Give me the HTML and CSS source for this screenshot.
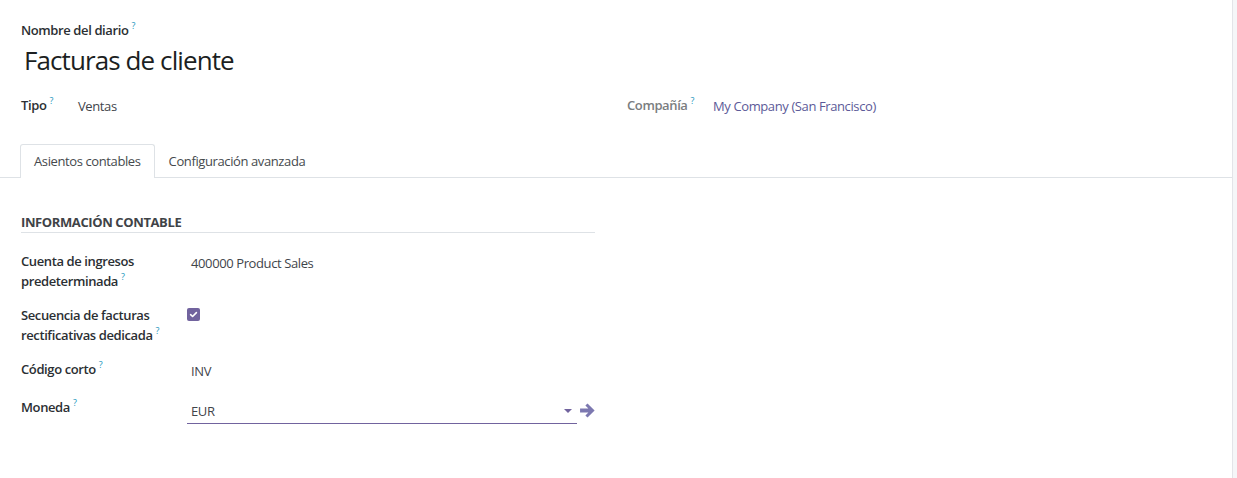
FILE: index.html
```html
<!DOCTYPE html>
<html lang="es">
<head>
<meta charset="utf-8">
<title>Facturas de cliente</title>
<link rel="stylesheet" href="styles.css">
</head>
<body>
<div class="app">
  <main class="form">
    <div class="sheet">
      <div class="title-block">
        <div class="lbl">Nombre del diario<sup class="tip">?</sup></div>
        <h1 class="title">Facturas de cliente</h1>
      </div>
      <div class="top-group">
        <div class="top-col">
          <div class="lbl tipo-lbl">Tipo<sup class="tip">?</sup></div>
          <div class="val">Ventas</div>
        </div>
        <div class="top-col">
          <div class="lbl comp-lbl muted">Compañía<sup class="tip">?</sup></div>
          <div class="val link">My Company (San Francisco)</div>
        </div>
      </div>
    </div>
    <div class="tabs">
      <div class="tab active">Asientos contables</div>
      <div class="tab">Configuración avanzada</div>
    </div>
    <div class="tab-content">
      <section class="group">
        <div class="group-title">INFORMACIÓN CONTABLE</div>
        <div class="rows">
          <div class="lbl row-lbl">Cuenta de ingresos predeterminada<sup class="tip">?</sup></div>
          <div class="row-val"><span class="val">400000 Product Sales</span></div>

          <div class="lbl row-lbl">Secuencia de facturas rectificativas dedicada<sup class="tip">?</sup></div>
          <div class="row-val">
            <span class="checkbox">
              <svg width="9" height="9" viewBox="0 0 9 9"><path d="M1.6 4.7 L3.6 6.5 L7.4 2.6" fill="none" stroke="#fff" stroke-width="1.6" stroke-linecap="round" stroke-linejoin="round"/></svg>
            </span>
          </div>

          <div class="lbl row-lbl">Código corto<sup class="tip">?</sup></div>
          <div class="row-val"><span class="val">INV</span></div>

          <div class="lbl row-lbl">Moneda<sup class="tip">?</sup></div>
          <div class="row-val currency">
            <div class="select">
              <span class="val">EUR</span>
              <span class="caret"></span>
            </div>
            <svg class="go" width="17" height="17" viewBox="0 0 16 16"><path d="M1 6.1 H8.8 L6 3.3 L8 1.3 L14.7 8 L8 14.7 L6 12.7 L8.8 9.9 H1 Z" fill="#7c78b0"/></svg>
          </div>
        </div>
      </section>
    </div>
  </main>
  <aside class="side"></aside>
</div>
</body>
</html>
```

FILE: styles.css
```css
* { box-sizing: border-box; }
html, body { margin: 0; padding: 0; }
body {
  font-family: "Open Sans", "Noto Sans", sans-serif;
  font-size: 13px;
  line-height: 20px;
  letter-spacing: -0.03em;
  color: #212529;
  background: #fff;
}
.app {
  display: flex;
  height: 478px;
}
.form {
  width: 1233px;
  border-right: 1px solid #e3e4e8;
}
.side {
  flex: 1;
  background: #f5f6f8;
}
.sheet {
  padding: 20px 0 0 21px;
}
.lbl {
  font-weight: 600;
  color: #2b2f33;
}
.muted { color: #7a7d80; }
.tip {
  font-size: 9px;
  font-weight: 400;
  color: #2196bd;
  margin-left: 3px;
  vertical-align: 6px;
  line-height: 0;
}
.title {
  margin: 3px 0 0 3px;
  font-size: 26px;
  line-height: 35px;
  font-weight: 400;
  letter-spacing: -0.035em;
  color: #1c1f22;
}
.top-group {
  display: flex;
  margin-top: 17px;
  gap: 32px;
  width: 1180px;
}
.top-col {
  flex: 1;
  display: flex;
  align-items: flex-start;
}
.tipo-lbl { width: 57px; }
.comp-lbl { width: 86px; }
.val {
  color: #3f454b;
  padding-top: 1px;
}
.link { color: #5c5a98; }
.tabs {
  display: flex;
  margin-top: 28px;
  padding-left: 20px;
  border-bottom: 1px solid #dee2e6;
}
.tab {
  padding: 6px 13px 6px;
  border: 1px solid transparent;
  border-bottom: none;
  color: #45494d;
  margin-bottom: -1px;
}
.tab.active {
  border-color: #dee2e6;
  border-radius: 3px 3px 0 0;
  background: #fff;
  padding-bottom: 7px;
}
.tab-content {
  padding: 34px 0 0 21px;
}
.group { width: 574px; }
.group-title {
  font-weight: 700;
  color: #3f4347;
  border-bottom: 1px solid #dee2e6;
  line-height: 20px;
}
.rows {
  display: grid;
  grid-template-columns: 166px 1fr;
  row-gap: 14px;
  margin-top: 18px;
}
.row-lbl { padding-right: 12px; }
.row-val .val { display: block; padding-left: 4px; padding-top: 2px; padding-bottom: 2px; }
.checkbox {
  display: flex;
  align-items: center;
  justify-content: center;
  width: 13px;
  height: 13px;
  margin-top: 3px;
  border-radius: 2px;
  background: #71639e;
}
.currency {
  display: flex;
  align-items: flex-start;
  padding-top: 2px;
}
.select {
  width: 390px;
  display: flex;
  align-items: center;
  justify-content: space-between;
  border-bottom: 1px solid #71639e;
}
.caret {
  width: 0;
  height: 0;
  border-left: 4px solid transparent;
  border-right: 4px solid transparent;
  border-top: 4px solid #71639e;
  margin-right: 5px;
}
.go { margin: 3px 0 0 2px; }
```
